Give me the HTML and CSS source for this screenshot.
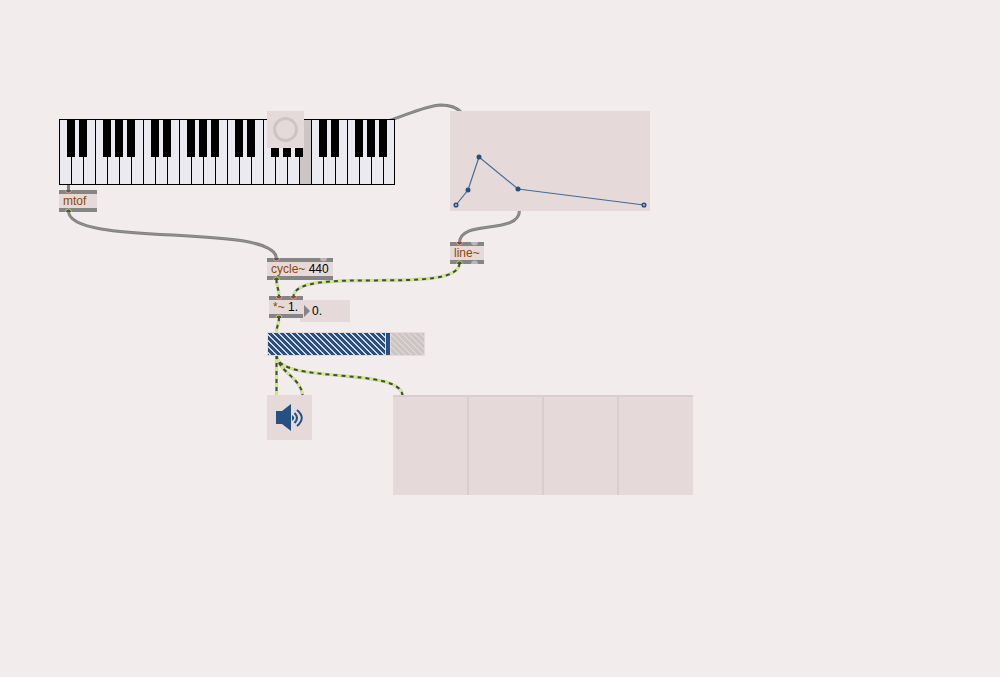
FILE: index.html
```html
<!DOCTYPE html>
<html lang="en">
<head>
<meta charset="utf-8">
<title>Patcher</title>
<meta name="viewport" content="width=device-width, initial-scale=1">
<link rel="stylesheet" href="styles.css">
</head>
<body>
<main class="patcher">
  <svg class="cables" aria-hidden="true">
    <defs>
      <path id="c1" d="M276.500 279C276.500 288 279 288 279 297"/>
      <path id="c2" d="M459.500 263C459.500 297 293.500 264 293.500 297"/>
      <path id="c3" d="M279 317C279 326 276.500 324 276.500 334"/>
      <path id="c4" d="M276.500 355V396"/>
      <path id="c5" d="M276.500 355C278 372 302 378 302.500 396"/>
      <path id="c6" d="M276.500 355C277 385 402 366 402.500 396"/>
    </defs>
    <g class="control">
      <path d="M68.500 184V191"/>
      <path d="M68.500 211C68.500 248 276.500 222 276.500 259"/>
      <path d="M388 121C407 115 424 106 441 105C450 105 456 107 461 112"/>
      <path d="M519.500 210C519.500 236 459.500 218 459.500 243"/>
    </g>
    <g class="control-core">
      <path d="M68.500 211C68.500 248 276.500 222 276.500 259"/>
      <path d="M388 121C407 115 424 106 441 105C450 105 456 107 461 112"/>
      <path d="M519.500 210C519.500 236 459.500 218 459.500 243"/>
    </g>
    <g class="signal-edge"><use href="#c1"/><use href="#c2"/><use href="#c3"/><use href="#c4"/><use href="#c5"/><use href="#c6"/></g>
    <g class="signal"><use href="#c1"/><use href="#c2"/><use href="#c3"/><use href="#c4"/><use href="#c5"/><use href="#c6"/></g>
    <g class="signal-dash"><use href="#c1"/><use href="#c2"/><use href="#c3"/><use href="#c4"/><use href="#c5"/><use href="#c6"/></g>
  </svg>

  <svg class="node keyboard" viewBox="0 0 336 66" role="img" aria-label="Keyboard">
    <defs>
      <g id="octave">
        <path class="edge" d="M0 0h1v66h-1zM12 38h1v28h-1zM24 38h1v28h-1zM36 0h1v66h-1zM48 38h1v28h-1zM60 38h1v28h-1zM72 38h1v28h-1z"/>
        <path class="edge" d="M8 0h8v38h-8zM20 0h8v38h-8zM44 0h8v38h-8zM56 0h8v38h-8zM68 0h8v38h-8z"/>
      </g>
    </defs>
    <rect class="ivory" width="336" height="66"/>
    <rect class="held" x="241" width="11" height="66"/>
    <use href="#octave"/><use href="#octave" x="84"/><use href="#octave" x="168"/><use href="#octave" x="252"/>
    <path class="edge" d="M0 0h336v1h-336zM0 65h336v1h-336zM335 0h1v66h-1z"/>
  </svg>

  <button class="node bang" type="button" aria-label="Bang"><span class="ring"></span></button>

  <svg class="node function" viewBox="0 0 200 100" role="img" aria-label="Envelope">
    <path class="curve" d="M6 94L18 79L29 46L68 78L194 94"/>
    <circle class="point" cx="18" cy="79" r="2.5"/><circle class="point" cx="29" cy="46" r="2.5"/><circle class="point" cx="68" cy="78" r="2.5"/>
    <circle class="end" cx="6" cy="94" r="1.8"/><circle class="end" cx="194" cy="94" r="1.8"/>
  </svg>

  <div class="node object mtof"><span class="name">mtof</span></div>
  <div class="node object cycle"><span class="name">cycle~</span> 440</div>
  <div class="node object line"><span class="name">line~</span></div>
  <label class="node number"><svg class="arrow" viewBox="0 0 6 12" aria-hidden="true"><path d="M0 0L6 6L0 12z"/></svg><input type="text" value="0." aria-label="Number"></label>
  <div class="node object times"><span class="name">*~</span> 1.</div>

  <div class="node gain">
    <span class="level"></span><span class="rest"></span>
    <input type="range" min="0" max="152" value="118" aria-label="Gain">
  </div>

  <button class="node dac" type="button" aria-label="Audio output">
    <svg viewBox="0 0 45 45" aria-hidden="true">
      <path class="cone" d="M9 16h6L24 9V36L15 29H9z"/>
      <path class="dot" d="M25 20Q29.500 23 25 26z"/>
      <path class="wave" d="M27.500 18Q32.500 23 27.500 28M30 15Q39.500 23 30 31"/>
    </svg>
  </button>

  <div class="node scope"><span></span><span></span><span></span><span></span></div>

  <svg class="cables" aria-hidden="true">
    <g class="inlet">
      <path d="M65.500 190A3 3 0 0 0 71.500 190M273.500 258A3 3 0 0 0 279.500 258M456.500 242A3 3 0 0 0 462.500 242M276 296A3 3 0 0 0 282 296M290.500 296A3 3 0 0 0 296.500 296"/>
    </g>
    <g class="outlet">
      <path d="M65.500 212A3 3 0 0 1 71.500 212M273.500 280A3 3 0 0 1 279.500 280M456.500 264A3 3 0 0 1 462.500 264M276 318A3 3 0 0 1 282 318"/>
    </g>
    <path class="free" d="M320 258A3 3 0 0 0 327 258zM471 242A3 3 0 0 0 478 242zM471 264A3 3 0 0 1 478 264z"/>
  </svg>
</main>
</body>
</html>
```
FILE: styles.css
```css
:root {
  --canvas: #f2ecec;
  --panel: #e5dad9;
  --bar: #858585;
  --blue: #255081;
}
* { box-sizing: border-box; }
body {
  margin: 0;
  background: var(--canvas);
  font: 12px/14px "Liberation Sans", Arial, sans-serif;
  color: #000;
}
button, input { font: inherit; color: inherit; margin: 0; padding: 0; border: 0; border-radius: 0; }
.patcher { position: relative; min-height: 100vh; overflow: hidden; }
.cables { position: absolute; inset: 0; width: 100%; height: 100%; fill: none; pointer-events: none; }
.control { stroke: #7f807f; stroke-width: 3; }
.control-core { stroke: #949494; stroke-width: 1; }
.signal-edge { stroke: #c3c6bb; stroke-width: 3; }
.signal { stroke: #ccf473; stroke-width: 2; }
.signal-dash { stroke: #45483a; stroke-width: 2; stroke-dasharray: 4 4; }
.inlet { fill: #5e5755; stroke: #e69b89; stroke-width: 1; }
.outlet { fill: #50523f; stroke: #c5d33e; stroke-width: 1; }
.free { fill: #b9b7b6; }

.node { position: absolute; display: block; }
.keyboard { left: 59px; top: 119px; width: 336px; height: 66px; }
.ivory { fill: #ebeaf0; }
.held { fill: #cbc5c5; }
.edge { fill: #000; shape-rendering: crispEdges; }

.bang { left: 267px; top: 111px; display: grid; place-items: center; width: 37px; height: 37px; background: var(--panel); }
.ring { width: 25px; height: 25px; border: 3px solid #cbc5c5; border-radius: 50%; }

.function { left: 450px; top: 111px; width: 200px; height: 100px; background: var(--panel); }
.curve { fill: none; stroke: #466a96; stroke-width: 1.2; }
.point { fill: var(--blue); }
.end { fill: #b9bfcb; stroke: var(--blue); stroke-width: 1.5; }

.object { padding: 0 4px; border: solid var(--bar); border-width: 4px 0; background: var(--panel); white-space: nowrap; }
.name { color: #8a4a00; }
.mtof { left: 59px; top: 190px; width: 38px; }
.cycle { left: 267px; top: 258px; width: 66px; }
.line { left: 450px; top: 242px; width: 34px; }
.times { left: 269px; top: 296px; width: 34px; }

.number { left: 300px; top: 300px; display: flex; align-items: center; gap: 2px; width: 50px; height: 22px; padding-left: 4px; background: var(--panel); }
.arrow { flex: none; width: 6px; height: 12px; fill: var(--bar); }
.number input { flex: 1; min-width: 0; background: none; }

.gain { left: 267px; top: 332px; display: flex; gap: 6px; width: 158px; height: 24px; padding: 1px; background: var(--panel); }
.level, .rest { background-size: 6px 6px; }
.level { flex: 0 0 117px; background-image: linear-gradient(45deg, var(--blue) 30%, #dcd6da 30% 50%, var(--blue) 50% 80%, #dcd6da 80%); }
.rest { flex: 1; background-image: linear-gradient(45deg, #cbc5c5 30%, #dcd3d2 30% 50%, #cbc5c5 50% 80%, #dcd3d2 80%); }
.gain input { position: absolute; inset: 1px; width: auto; height: 22px; appearance: none; background: none; }
.gain input::-webkit-slider-thumb { appearance: none; width: 4px; height: 22px; background: var(--blue); }

.dac { left: 267px; top: 395px; width: 45px; height: 45px; background: var(--panel); }
.dac svg { display: block; width: 45px; height: 45px; }
.cone, .dot { fill: var(--blue); }
.wave { fill: none; stroke: var(--blue); stroke-width: 2; }

.scope { left: 393px; top: 395px; display: grid; grid-template-columns: repeat(4, 1fr); width: 300px; height: 100px; border-top: 2px solid #d8cecd; background: var(--panel); }
.scope span:not(:last-child) { border-right: 1px solid #d8cecd; }
.scope span + span { border-left: 1px solid #d8cecd; }
</style>
```
